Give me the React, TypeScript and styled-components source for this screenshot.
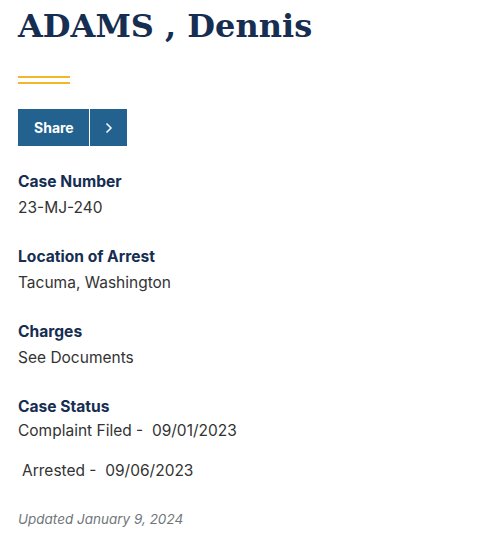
import React from "react";
import styled, { createGlobalStyle } from "styled-components";

const Global = createGlobalStyle`
  html, body { margin: 0; padding: 0; background: #fff; }
  body { font-family: "Inter", "Liberation Sans", sans-serif; }
`;

const Page = styled.main`
  padding: 0 18px;
`;

const Title = styled.h1`
  margin: 0;
  padding-top: 6px;
  font-family: "DejaVu Serif", "Liberation Serif", serif;
  font-weight: 700;
  font-size: 32px;
  line-height: 40px;
  color: #162e51;
`;

const Rule = styled.div`
  margin-top: 30px;
  width: 52px;
  height: 8px;
  border-top: 2px solid #f4b728;
  border-bottom: 2px solid #f4b728;
  box-sizing: border-box;
`;

const ShareButton = styled.button`
  margin-top: 25px;
  display: flex;
  align-items: stretch;
  height: 37px;
  padding: 0;
  border: 0;
  background: #23618e;
  color: #fff;
  cursor: pointer;
`;

const ShareLabel = styled.span`
  display: flex;
  align-items: center;
  width: 72px;
  padding-left: 16px;
  box-sizing: border-box;
  font-family: "Inter", "Liberation Sans", sans-serif;
  font-weight: 700;
  font-size: 14px;
  border-right: 1px solid #fff;
`;

const ShareIcon = styled.span`
  display: flex;
  align-items: center;
  justify-content: center;
  width: 37px;
`;

const Field = styled.section`
  margin-top: 25px;
  &:first-of-type { margin-top: 24px; }
`;

const Label = styled.h2`
  margin: 0;
  font-size: 15.6px;
  line-height: 24px;
  font-weight: 700;
  color: #162e51;
`;

const Value = styled.p`
  margin: 2px 0 0;
  font-size: 15.5px;
  line-height: 24px;
  color: #333333;
`;

const StatusLine = styled.p<{ $indent?: boolean }>`
  margin: 0 0 16px;
  padding-left: ${(p) => (p.$indent ? 4 : 0)}px;
  font-size: 15.5px;
  line-height: 24px;
  color: #333333;
`;

const Updated = styled.p`
  margin: 26px 0 0;
  font-size: 13.5px;
  line-height: 20px;
  font-style: italic;
  color: #71767a;
`;

export default function App() {
  return (
    <>
      <Global />
      <Page>
        <Title>ADAMS , Dennis</Title>
        <Rule />
        <ShareButton>
          <ShareLabel>Share</ShareLabel>
          <ShareIcon>
            <svg width="8" height="12" viewBox="0 0 8 12" fill="none">
              <path d="M1.5 1.5 L6 6 L1.5 10.5" stroke="#fff" strokeWidth="1.5" />
            </svg>
          </ShareIcon>
        </ShareButton>
        <div>
          <Field>
            <Label>Case Number</Label>
            <Value>23-MJ-240</Value>
          </Field>
          <Field>
            <Label>Location of Arrest</Label>
            <Value>Tacuma, Washington</Value>
          </Field>
          <Field>
            <Label>Charges</Label>
            <Value>See Documents</Value>
          </Field>
          <Field>
            <Label>Case Status</Label>
            <StatusLine>Complaint Filed -&nbsp; 09/01/2023</StatusLine>
            <StatusLine $indent>Arrested -&nbsp; 09/06/2023</StatusLine>
          </Field>
        </div>
        <Updated>Updated January 9, 2024</Updated>
      </Page>
    </>
  );
}
